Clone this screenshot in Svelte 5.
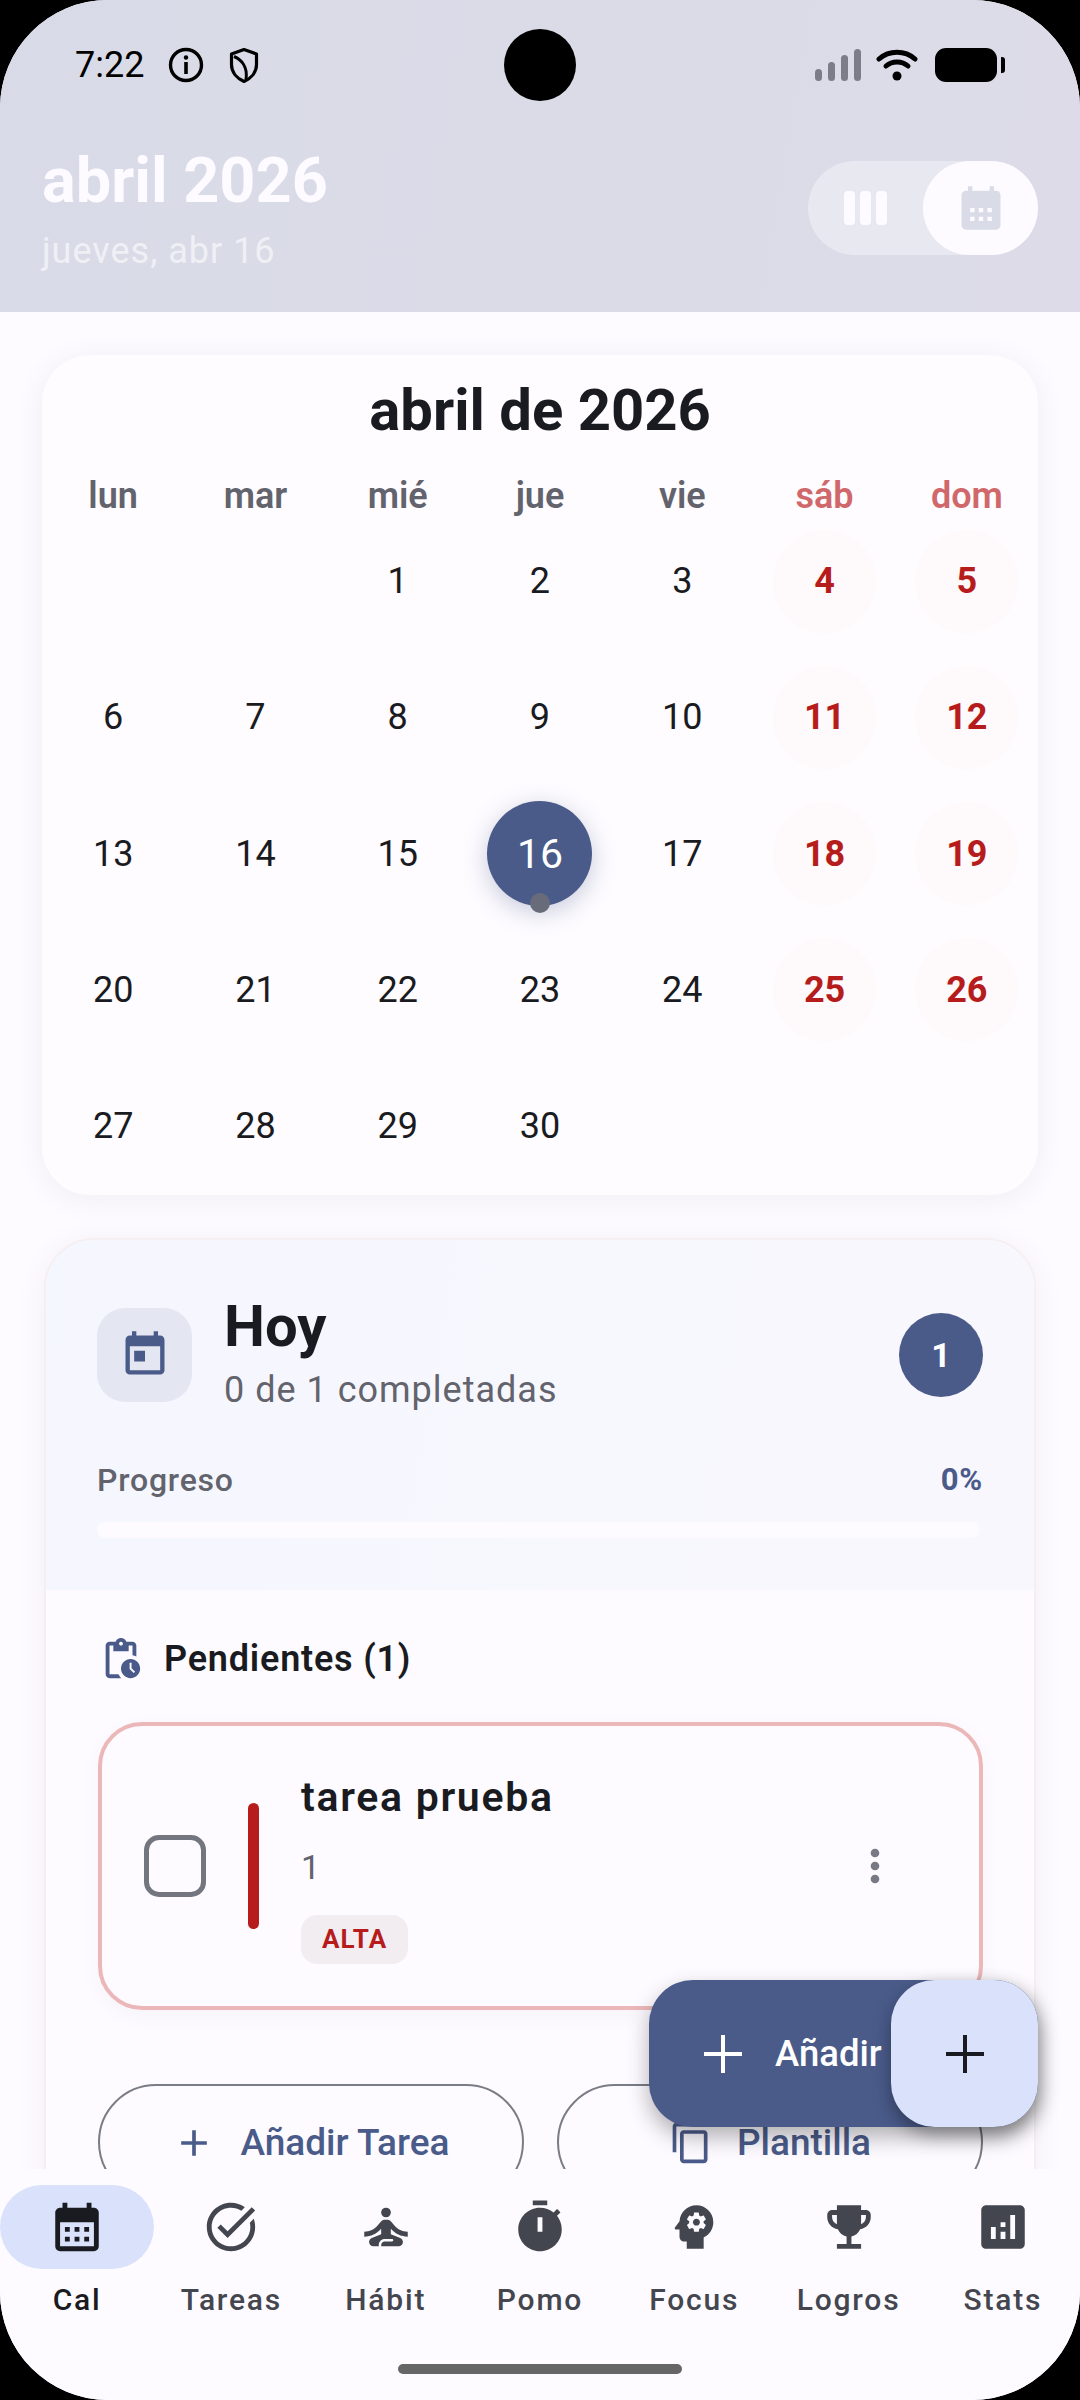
<script>
    const weekdays = [
        { label: "lun" },
        { label: "mar" },
        { label: "mié" },
        { label: "jue" },
        { label: "vie" },
        { label: "sáb", weekend: true },
        { label: "dom", weekend: true },
    ];

    // abril 2026 starts on a Wednesday
    const days = [null, null];
    for (let d = 1; d <= 30; d++) days.push(d);

    const isWeekend = (i) => i % 7 >= 5;

    const calOutline =
        "M19 4h-1V2h-2v2H8V2H6v2H5c-1.1 0-2 .9-2 2v14c0 1.1.9 2 2 2h14c1.1 0 2-.9 2-2V6c0-1.1-.9-2-2-2zm0 16H5V10h14v10zM9 14H7v-2h2v2zm4 0h-2v-2h2v2zm4 0h-2v-2h2v2zm-8 4H7v-2h2v2zm4 0h-2v-2h2v2zm4 0h-2v-2h2v2z";
    const calFilled =
        "M19 4h-1V2h-2v2H8V2H6v2H5c-1.1 0-2 .9-2 2v14c0 1.1.9 2 2 2h14c1.1 0 2-.9 2-2V6c0-1.1-.9-2-2-2zM9 18H7v-2h2v2zm0-4H7v-2h2v2zm4 4h-2v-2h2v2zm0-4h-2v-2h2v2zm4 4h-2v-2h2v2zm0-4h-2v-2h2v2z";

    const nav = [
        { label: "Cal", active: true, paths: [calOutline] },
        {
            label: "Tareas",
            paths: [
                "M22 5.18 10.59 16.6l-4.24-4.24 1.41-1.41 2.83 2.83 10-10L22 5.18zm-2.21 5.04c.13.57.21 1.17.21 1.78 0 4.42-3.58 8-8 8s-8-3.58-8-8 3.58-8 8-8c1.58 0 3.04.46 4.28 1.25l1.44-1.44C16.1 2.67 14.13 2 12 2 6.48 2 2 6.48 2 12s4.48 10 10 10 10-4.48 10-10c0-1.19-.22-2.33-.6-3.39l-1.61 1.61z",
            ],
        },
        {
            label: "Hábit",
            paths: [
                "M14 6a2 2 0 1 1-4 0 2 2 0 0 1 4 0z",
                "M21 16v-2c-2.24 0-4.16-.96-5.6-2.68l-1.34-1.6c-.38-.46-.94-.72-1.53-.72h-1.05c-.59 0-1.15.26-1.53.72l-1.34 1.6C7.16 13.04 5.24 14 3 14v2c2.77 0 5.19-1.17 7-3.25V15l-3.88 1.55c-.67.27-1.12.93-1.12 1.66C5 19.2 5.8 20 6.79 20H9v-.5c0-1.38 1.12-2.5 2.5-2.5h3c.28 0 .5.22.5.5s-.22.5-.5.5h-3c-.83 0-1.5.67-1.5 1.5v.5h7.21c.99 0 1.79-.8 1.79-1.79 0-.73-.45-1.39-1.12-1.66L14 15v-2.25c1.81 2.08 4.23 3.25 7 3.25z",
            ],
        },
        {
            label: "Pomo",
            paths: [
                "M9 1h6v2H9zm10.03 6.39 1.42-1.42c-.43-.51-.9-.99-1.41-1.41l-1.42 1.42C16.07 4.74 14.12 4 12 4c-4.97 0-9 4.03-9 9s4.02 9 9 9 9-4.03 9-9c0-2.12-.74-4.07-1.97-5.61zM13 14h-2V8h2v6z",
            ],
        },
        {
            label: "Focus",
            paths: [
                "M13 8.57c-.79 0-1.43.64-1.43 1.43s.64 1.43 1.43 1.43 1.43-.64 1.43-1.43-.64-1.43-1.43-1.43z",
                "M13 3C9.25 3 6.2 5.94 6.02 9.64L4.1 12.2c-.25.33-.01.8.4.8H6v3c0 1.1.9 2 2 2h1v3h7v-4.68c2.36-1.12 4-3.53 4-6.32 0-3.87-3.13-7-7-7zm3 7c0 .13-.01.26-.02.39l.83.66c.08.06.1.16.05.25l-.8 1.39c-.05.09-.16.12-.24.09l-.99-.4c-.21.16-.43.29-.67.39L14 13.83c-.01.1-.1.17-.2.17h-1.6c-.1 0-.18-.07-.2-.17l-.15-1.06c-.25-.1-.47-.23-.68-.39l-.99.4c-.09.03-.2 0-.25-.09l-.8-1.39c-.05-.08-.03-.19.05-.25l.84-.66c-.01-.13-.02-.26-.02-.39s.02-.27.04-.39l-.85-.66c-.08-.06-.1-.16-.05-.26l.8-1.38c.05-.09.15-.12.24-.09l1 .4c.2-.15.43-.29.67-.39L12 6.17c.02-.1.1-.17.2-.17h1.6c.1 0 .18.07.2.17l.15 1.06c.24.1.46.23.67.39l1-.4c.09-.03.2 0 .24.09l.8 1.38c.05.09.03.2-.05.26l-.85.66c.03.12.04.25.04.39z",
            ],
        },
        {
            label: "Logros",
            paths: [
                "M19 5h-2V3H7v2H5c-1.1 0-2 .9-2 2v1c0 2.55 1.92 4.63 4.39 4.94.63 1.5 1.98 2.63 3.61 2.96V19H7v2h10v-2h-4v-3.1c1.63-.33 2.98-1.46 3.61-2.96C19.08 12.63 21 10.55 21 8V7c0-1.1-.9-2-2-2zM5 8V7h2v3.82C5.84 10.4 5 9.3 5 8zm14 0c0 1.3-.84 2.4-2 2.82V7h2v1z",
            ],
        },
        {
            label: "Stats",
            paths: [
                "M19 3H5c-1.1 0-2 .9-2 2v14c0 1.1.9 2 2 2h14c1.1 0 2-.9 2-2V5c0-1.1-.9-2-2-2zM9 17H7v-5h2v5zm4 0h-2v-3h2v3zm0-5h-2v-2h2v2zm4 5h-2V7h2v10z",
            ],
        },
    ];
</script>

<div class="screen">
    <header class="top">
        <div class="status">
            <div class="status-left">
                <span class="clock">7:22</span>
                <svg class="st-info" viewBox="0 0 36 36">
                    <circle cx="18" cy="18" r="15.5" fill="none" stroke="#000" stroke-width="3.4" />
                    <circle cx="18" cy="10.5" r="2.2" />
                    <rect x="16.2" y="15" width="3.6" height="12" />
                </svg>
                <svg class="st-shield" viewBox="0 0 30 36">
                    <path d="M15 2 27.5 6.5V17C27.5 25 22 31 15 34 8 31 2.500 25 2.500 17V6.500Z" fill="none" stroke="#000" stroke-width="3.200" stroke-linejoin="round" />
                    <path d="M5 9C12 12 19 19 17 32" fill="none" stroke="#000" stroke-width="3" />
                </svg>
            </div>
            <div class="status-right">
                <svg class="st-signal" viewBox="0 0 46 32" fill="#7c7d88">
                    <rect x="0" y="20" width="7" height="12" rx="3.500" />
                    <rect x="13" y="13" width="7" height="19" rx="3.500" />
                    <rect x="26" y="6" width="7" height="26" rx="3.500" />
                    <rect x="39" y="0" width="7" height="32" rx="3.500" />
                </svg>
                <svg class="st-wifi" viewBox="0 0 42 32" fill="none" stroke="#000" stroke-linecap="round" stroke-width="5">
                    <path d="M3 10C13 1 29 1 39 10" />
                    <path d="M10 17C16 11.500 26 11.500 32 17" />
                    <circle cx="21" cy="27" r="4.500" fill="#000" stroke="none" />
                </svg>
                <div class="st-battery"><span></span></div>
            </div>
        </div>

        <div class="top-row">
            <div>
                <h1>abril 2026</h1>
                <p class="date">jueves, abr 16</p>
            </div>
            <div class="toggle">
                <div class="toggle-opt">
                    <span class="bars"><i></i><i></i><i></i></span>
                </div>
                <div class="toggle-opt on">
                    <svg viewBox="0 0 24 24" width="52" height="52"><path d={calFilled} fill="#d9dbe7" /></svg>
                </div>
            </div>
        </div>
    </header>

    <main>
        <section class="calendar">
            <h2>abril de 2026</h2>
            <div class="grid heads">
                {#each weekdays as w}
                    <span class="head" class:weekend={w.weekend}>{w.label}</span>
                {/each}
            </div>
            <div class="grid days">
                {#each days as d, i}
                    <div class="cell">
                        {#if d}
                            <span class="day" class:weekend={isWeekend(i)} class:today={d === 16}>
                                {d}
                                {#if d === 16}<b class="dot"></b>{/if}
                            </span>
                        {/if}
                    </div>
                {/each}
            </div>
        </section>

        <section class="today-card">
            <div class="today-head">
                <div class="today-row">
                    <div class="today-icon">
                        <svg viewBox="0 0 24 24" width="52" height="52">
                            <path d="M19 3h-1V1h-2v2H8V1H6v2H5c-1.110 0-1.990.900-1.990 2L3 19c0 1.100.890 2 2 2h14c1.100 0 2-.900 2-2V5c0-1.100-.900-2-2-2zm0 16H5V8h14v11zM7 10h5v5H7z" fill="#4a5b8a" />
                        </svg>
                    </div>
                    <div class="today-text">
                        <h3>Hoy</h3>
                        <p>0 de 1 completadas</p>
                    </div>
                    <div class="count">1</div>
                </div>
                <div class="progress-label">
                    <span>Progreso</span>
                    <span class="pct">0%</span>
                </div>
                <div class="progress"></div>
            </div>

            <div class="today-body">
                <div class="pending">
                    <svg viewBox="0 0 24 24" width="46" height="46">
                        <path d="M17 12c-2.760 0-5 2.240-5 5s2.240 5 5 5 5-2.240 5-5-2.240-5-5-5zm1.650 7.350L16.500 17.200V14h1v2.790l1.850 1.850-.7.710zM18 3h-3.180C14.400 1.840 13.300 1 12 1s-2.400.840-2.820 2H6c-1.100 0-2 .900-2 2v15c0 1.100.900 2 2 2h6.110c-.590-.570-1.070-1.250-1.420-2H6V5h2v3h8V5h2v5.080c.710.100 1.380.310 2 .600V5c0-1.100-.900-2-2-2zm-6 2c-.550 0-1-.450-1-1s.450-1 1-1 1 .450 1 1-.450 1-1 1z" fill="#4a5b8a" />
                    </svg>
                    <span>Pendientes (1)</span>
                </div>

                <div class="task">
                    <div class="check"></div>
                    <div class="prio"></div>
                    <div class="task-text">
                        <div class="task-title">tarea prueba</div>
                        <div class="task-desc">1</div>
                        <span class="tag">ALTA</span>
                    </div>
                    <svg class="more" viewBox="0 0 24 24" width="52" height="52">
                        <path d="M12 8c1.100 0 2-.900 2-2s-.900-2-2-2-2 .900-2 2 .900 2 2 2zm0 2c-1.100 0-2 .900-2 2s.900 2 2 2 2-.900 2-2-.900-2-2-2zm0 6c-1.100 0-2 .900-2 2s.900 2 2 2 2-.900 2-2-.900-2-2-2z" fill="#777a85" />
                    </svg>
                </div>

                <div class="actions">
                    <button>
                        <svg viewBox="0 0 24 24" width="44" height="44"><path d="M19 13h-6v6h-2v-6H5v-2h6V5h2v6h6v2z" fill="#4a5b8a" /></svg>
                        Añadir Tarea
                    </button>
                    <button>
                        <svg viewBox="0 0 24 24" width="44" height="44"><path d="M16 1H4c-1.100 0-2 .900-2 2v14h2V3h12V1zm3 4H8c-1.100 0-2 .900-2 2v14c0 1.100.900 2 2 2h11c1.100 0 2-.900 2-2V7c0-1.100-.900-2-2-2zm0 16H8V7h11v14z" fill="#4a5b8a" /></svg>
                        Plantilla
                    </button>
                </div>
            </div>
        </section>
    </main>

    <nav>
        {#each nav as item}
            <div class="nav-item" class:active={item.active}>
                <div class="nav-icon">
                    <svg viewBox="0 0 24 24" width="58" height="58">
                        {#each item.paths as d}
                            <path {d} />
                        {/each}
                    </svg>
                </div>
                <span>{item.label}</span>
            </div>
        {/each}
    </nav>

    <div class="home-bar"></div>
    <div class="camera"></div>

    <div class="fab-wrap">
        <div class="fab-label">
            <svg viewBox="0 0 40 40" width="40" height="40"><path d="M20 1v38M1 20h38" stroke="#fff" stroke-width="4" /></svg>
            <span>Añadir</span>
        </div>
        <div class="fab">
            <svg viewBox="0 0 40 40" width="40" height="40"><path d="M20 1v38M1 20h38" stroke="#1a1b21" stroke-width="4" /></svg>
        </div>
    </div>
</div>

<style>
    :global(body) {
        background: #000;
    }

    .screen {
        position: relative;
        width: 1080px;
        height: 2400px;
        overflow: hidden;
        border-radius: 108px;
        background: #fdfbff;
        display: flex;
        flex-direction: column;
        font-family: Roboto, sans-serif;
        color: #1a1b21;
    }

    .top {
        height: 312px;
        flex: none;
        box-sizing: border-box;
        background: linear-gradient(100deg, #d8dbe7, #dddbe8);
    }

    .status {
        display: flex;
        justify-content: space-between;
        align-items: center;
        height: 130px;
        padding: 0 76px 0 75px;
    }

    .status-left,
    .status-right {
        display: flex;
        align-items: center;
    }

    .clock {
        font-size: 36px;
        color: #000;
        width: 93px;
    }

    .st-info {
        width: 36px;
        height: 36px;
        margin-right: 25px;
    }

    .st-shield {
        width: 30px;
        height: 37px;
    }

    .st-signal {
        width: 46px;
        height: 32px;
        margin-right: 15px;
    }

    .st-wifi {
        width: 42px;
        height: 32px;
        margin-right: 17px;
    }

    .st-battery {
        width: 62px;
        height: 34px;
        background: #000;
        border-radius: 11px;
        position: relative;
        margin-right: 7px;
    }

    .st-battery span {
        position: absolute;
        left: 66px;
        top: 9px;
        width: 4px;
        height: 16px;
        border-radius: 0 3px 3px 0;
        background: #000;
    }

    .top-row {
        display: flex;
        justify-content: space-between;
        align-items: flex-start;
        padding: 18px 42px 0;
    }

    h1 {
        margin: 0;
        font-size: 63px;
        line-height: 66px;
        font-weight: 700;
        color: #fdfbff;
    }

    .date {
        margin: 14px 0 0;
        font-size: 36px;
        line-height: 46px;
        letter-spacing: 1px;
        color: #eff0f5;
    }

    .toggle {
        display: flex;
        width: 230px;
        height: 94px;
        margin-top: 13px;
        border-radius: 47px;
        background: #e7e8f0;
    }

    .toggle-opt {
        width: 115px;
        height: 94px;
        display: flex;
        align-items: center;
        justify-content: center;
        border-radius: 47px;
    }

    .toggle-opt.on {
        background: #fdfbff;
    }

    .bars {
        display: flex;
        gap: 5px;
    }

    .bars i {
        width: 11px;
        height: 34px;
        border-radius: 4px;
        background: #fdfbff;
    }

    main {
        flex: 1;
        min-height: 0;
        overflow: hidden;
        padding: 43px 42px 0;
    }

    .calendar {
        height: 840px;
        box-sizing: border-box;
        padding-top: 20px;
        border-radius: 48px;
        background: #fefcff;
        box-shadow: 0 4px 32px rgba(30, 30, 60, 0.06);
    }

    h2 {
        margin: 0 0 33px;
        font-size: 58px;
        line-height: 70px;
        font-weight: 700;
        text-align: center;
    }

    .grid {
        display: grid;
        grid-template-columns: repeat(7, 1fr);
    }

    .heads {
        height: 36px;
    }

    .head {
        font-size: 36px;
        line-height: 36px;
        font-weight: 600;
        text-align: center;
        color: #62636c;
    }

    .head.weekend {
        color: #d0686b;
    }

    .days {
        margin-top: 5px;
        grid-auto-rows: 124px;
        row-gap: 12.3px;
    }

    .cell {
        display: flex;
        align-items: center;
        justify-content: center;
    }

    .day {
        position: relative;
        width: 103px;
        height: 103px;
        display: flex;
        align-items: center;
        justify-content: center;
        border-radius: 50%;
        font-size: 36px;
    }

    .day.weekend {
        background: #fef9fa;
        color: #b71c1c;
        font-weight: 700;
    }

    .day.today {
        width: 105px;
        height: 105px;
        background: #4a5b8a;
        color: #fff;
        font-size: 41px;
        box-shadow: 0 6px 24px rgba(74, 91, 138, 0.3);
    }

    .dot {
        position: absolute;
        left: 43px;
        bottom: -7px;
        width: 20px;
        height: 20px;
        border-radius: 50%;
        background: #686b7a;
    }

    .today-card {
        margin: 43px 2px 0;
        height: 1100px;
        border: 2px solid #f5eff2;
        border-radius: 50px;
        overflow: hidden;
        background: #fdfbff;
        box-shadow: 0 4px 32px rgba(30, 30, 60, 0.05);
    }

    .today-head {
        height: 350px;
        box-sizing: border-box;
        padding: 50px 51px 0;
        background: linear-gradient(100deg, #f5f7fe, #f9f7fe);
    }

    .today-row {
        display: flex;
        align-items: center;
        height: 130px;
    }

    .today-icon {
        width: 95px;
        height: 94px;
        margin-right: 32px;
        border-radius: 28px;
        background: #e4e7f2;
        display: flex;
        align-items: center;
        justify-content: center;
    }

    .today-text {
        flex: 1;
    }

    h3 {
        margin: 0;
        font-size: 58px;
        line-height: 70px;
        font-weight: 700;
    }

    .today-text p {
        margin: 0;
        font-size: 36px;
        line-height: 58px;
        letter-spacing: 1px;
        color: #62636c;
    }

    .count {
        width: 84px;
        height: 84px;
        border-radius: 50%;
        background: #4a5b8a;
        color: #fff;
        font-size: 34px;
        font-weight: 700;
        display: flex;
        align-items: center;
        justify-content: center;
    }

    .progress-label {
        display: flex;
        justify-content: space-between;
        margin-top: 40px;
        font-size: 32px;
        line-height: 40px;
        font-weight: 500;
        letter-spacing: 0.8px;
        color: #62636c;
    }

    .pct {
        color: #4a5b8a;
        font-weight: 700;
        font-size: 31px;
    }

    .progress {
        height: 16px;
        margin: 22px 3px 0 0;
        border-radius: 8px;
        background: #fdfbff;
    }

    .today-body {
        padding: 45px 51px 0 52px;
    }

    .pending {
        display: flex;
        align-items: center;
        height: 48px;
        gap: 20px;
        font-size: 36px;
        font-weight: 600;
        letter-spacing: 0.8px;
    }

    .task {
        display: flex;
        align-items: center;
        height: 288px;
        box-sizing: border-box;
        margin-top: 39px;
        padding-left: 42px;
        border: 4px solid #ebb7b8;
        border-radius: 44px;
        box-shadow: 0 6px 24px rgba(30, 30, 60, 0.03);
    }

    .check {
        width: 62px;
        height: 62px;
        box-sizing: border-box;
        border: 5px solid #74767f;
        border-radius: 15px;
        margin-right: 42px;
    }

    .prio {
        width: 11px;
        height: 126px;
        border-radius: 6px;
        background: #b71c1c;
        margin-right: 42px;
    }

    .task-text {
        flex: 1;
    }

    .task-title {
        font-size: 41px;
        line-height: 58px;
        font-weight: 600;
        letter-spacing: 1.700px;
    }

    .task-desc {
        margin-top: 20px;
        font-size: 34px;
        line-height: 42px;
        color: #62636c;
    }

    .tag {
        display: inline-block;
        margin-top: 27px;
        padding: 0 21px;
        height: 49px;
        line-height: 49px;
        border-radius: 16px;
        background: #f1edf0;
        color: #b71c1c;
        font-size: 26px;
        font-weight: 700;
        letter-spacing: 1.100px;
    }

    .more {
        margin-right: 78px;
    }

    .actions {
        display: flex;
        gap: 33px;
        margin-top: 74px;
    }

    .actions button {
        flex: 1;
        height: 116px;
        display: flex;
        align-items: center;
        justify-content: center;
        gap: 24px;
        padding-top: 2px;
        background: none;
        border: 2.500px solid #7a7c86;
        border-radius: 58px;
        color: #4a5b8a;
        font-family: inherit;
        font-size: 37px;
        font-weight: 500;
    }

    nav {
        flex: none;
        height: 231px;
        box-sizing: border-box;
        display: flex;
        padding-top: 16px;
        background: #fdfbff;
    }

    .nav-item {
        flex: 1;
        display: flex;
        flex-direction: column;
        align-items: center;
        color: #44464f;
    }

    .nav-icon {
        width: 100%;
        height: 84px;
        display: flex;
        align-items: center;
        justify-content: center;
        border-radius: 42px;
    }

    .nav-icon svg {
        fill: #44464f;
    }

    .nav-item span {
        margin-top: 12px;
        font-size: 30px;
        line-height: 38px;
        font-weight: 500;
        letter-spacing: 1.800px;
    }

    .nav-item.active .nav-icon {
        background: #dae2fb;
    }

    .nav-item.active .nav-icon svg {
        fill: #1a1b21;
    }

    .nav-item.active span {
        color: #1a1b21;
    }

    .home-bar {
        position: absolute;
        left: 398px;
        top: 2364px;
        width: 284px;
        height: 10px;
        border-radius: 5px;
        background: #666;
    }

    .camera {
        position: absolute;
        left: 504px;
        top: 29px;
        width: 72px;
        height: 72px;
        border-radius: 50%;
        background: #000;
    }

    .fab-wrap {
        position: absolute;
        left: 649px;
        top: 1980px;
        width: 389px;
        height: 147px;
        display: flex;
        justify-content: space-between;
        border-radius: 44px;
        background: #4a5b8a;
        box-shadow: 0 10px 22px rgba(0, 0, 0, 0.3);
    }

    .fab-label {
        display: flex;
        align-items: center;
        padding-left: 54px;
        gap: 32px;
        color: #fff;
        font-size: 36.5px;
        font-weight: 500;
    }

    .fab {
        width: 147px;
        height: 147px;
        flex: none;
        display: flex;
        align-items: center;
        justify-content: center;
        border-radius: 44px;
        background: #dae2fb;
        box-shadow: 0 8px 18px rgba(0, 0, 0, 0.35);
    }
</style>
